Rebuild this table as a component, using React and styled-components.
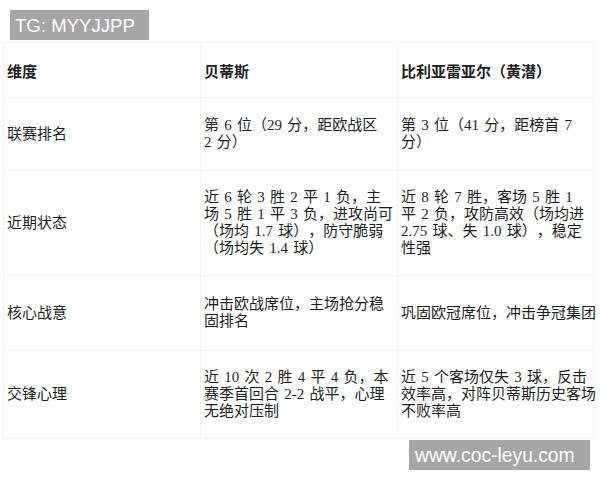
import React from "react";
import styled, { createGlobalStyle } from "styled-components";

// line breaks follow the source image
const rows = [
  {
    label: "联赛排名",
    height: 73,
    betis: ["第 6 位（29 分，距欧战区", "2 分）"],
    villa: ["第 3 位（41 分，距榜首 7", "分）"],
  },
  {
    label: "近期状态",
    height: 105,
    betis: [
      "近 6 轮 3 胜 2 平 1 负，主",
      "场 5 胜 1 平 3 负，进攻尚可",
      "（场均 1.7 球），防守脆弱",
      "（场均失 1.4 球）",
    ],
    villa: [
      "近 8 轮 7 胜，客场 5 胜 1",
      "平 2 负，攻防高效（场均进",
      "2.75 球、失 1.0 球），稳定",
      "性强",
    ],
  },
  {
    label: "核心战意",
    height: 75,
    betis: ["冲击欧战席位，主场抢分稳", "固排名"],
    villa: ["巩固欧冠席位，冲击争冠集团"],
  },
  {
    label: "交锋心理",
    height: 88,
    betis: ["近 10 次 2 胜 4 平 4 负，本", "赛季首回合 2-2 战平，心理", "无绝对压制"],
    villa: ["近 5 个客场仅失 3 球，反击", "效率高，对阵贝蒂斯历史客场", "不败率高"],
  },
];

const Lines = ({ lines }) =>
  lines.map((l, i) => <Line key={i}>{l}</Line>);

const App = () => {
  return (
    <>
      <GlobalStyle />
      <Page>
        <Tag>TG: MYYJJPP</Tag>
        <Table>
          <colgroup>
            <col style={{ width: 197 }} />
            <col style={{ width: 197 }} />
            <col style={{ width: 196 }} />
          </colgroup>
          <thead>
            <Row height={55}>
              <HeadCell>维度</HeadCell>
              <HeadCell>贝蒂斯</HeadCell>
              <HeadCell>
                <Line>比利亚雷亚尔（黄潜）</Line>
              </HeadCell>
            </Row>
          </thead>
          <tbody>
            {rows.map((r) => (
              <Row key={r.label} height={r.height}>
                <Cell>{r.label}</Cell>
                <Cell>
                  <Lines lines={r.betis} />
                </Cell>
                <Cell>
                  <Lines lines={r.villa} />
                </Cell>
              </Row>
            ))}
          </tbody>
        </Table>
        <Footer>
          <Mark>www.coc-leyu.com</Mark>
        </Footer>
      </Page>
    </>
  );
};

export default App;

const GlobalStyle = createGlobalStyle`
  body {
    margin: 0;
    background: #ffffff;
  }
`;

const Page = styled.div`
  width: 600px;
  height: 480px;
  overflow: hidden;
  padding-top: 10px;
  box-sizing: border-box;
`;

const Tag = styled.div`
  width: 139px;
  height: 30px;
  margin-left: 10px;
  box-sizing: border-box;
  padding-left: 5px;
  background: #a6a6a6;
  color: #ffffff;
  font-family: "Liberation Sans", Arial, sans-serif;
  font-size: 18.6px;
  line-height: 31px;
`;

const Table = styled.table`
  margin: 2px 0 0 3px;
  width: 590px;
  border-collapse: collapse;
  table-layout: fixed;
  font-family: "Liberation Serif", "Noto Sans CJK SC", serif;
  font-size: 15px;
  line-height: 17px;
  color: #1e1e1e;
  text-spacing-trim: space-all;
`;

const Row = styled.tr`
  height: ${(p) => p.height}px;
`;

const Cell = styled.td`
  padding: 0 3px;
  vertical-align: middle;
  border: 1px solid #f3f3f3;
  word-spacing: 1.5px;
  overflow: visible;
`;

const HeadCell = styled(Cell).attrs({ as: "th" })`
  text-align: left;
  font-family: "Noto Sans CJK SC", sans-serif;
  font-weight: 700;
`;

const Line = styled.div`
  white-space: nowrap;
`;

const Footer = styled.div`
  display: flex;
  justify-content: flex-end;
  padding: 1px 10px 0 0;
`;

const Mark = styled.div`
  width: 181px;
  height: 30px;
  box-sizing: border-box;
  padding-left: 6px;
  background: #a6a6a6;
  color: #ffffff;
  font-family: "Liberation Sans", Arial, sans-serif;
  font-size: 19.3px;
  line-height: 31px;
`;
